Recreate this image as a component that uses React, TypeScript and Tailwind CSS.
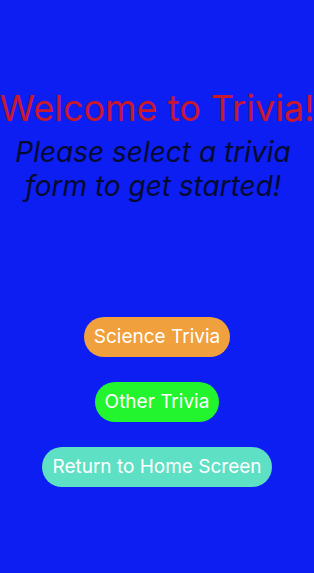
export default function App() {
  return (
    <div
      className="flex h-[573px] w-full flex-col items-center bg-[#0c1ef2]"
      style={{ fontFamily: "Inter, 'Noto Sans', sans-serif" }}
    >
      <h1 className="mt-[86px] whitespace-nowrap text-center text-[36px] leading-[44px] font-normal text-[#c8182e]">
        Welcome to Trivia!
      </h1>
      <p className="mt-[5px] pl-[4px] pr-[12px] text-center text-[28px] leading-[34px] italic text-[#050a30]">
        Please select a trivia form to get started!
      </p>
      <div className="mt-[114px] flex flex-col items-center gap-[25px]">
        <button className="h-10 rounded-full bg-[#f0a03c] px-[10px] text-[19px] text-white">
          Science Trivia
        </button>
        <button className="h-10 rounded-full bg-[#22f52e] px-[10px] text-[19px] text-white">
          Other Trivia
        </button>
        <button className="h-10 rounded-full bg-[#5de0c3] px-[10px] text-[19px] text-white">
          Return to Home Screen
        </button>
      </div>
    </div>
  );
}
